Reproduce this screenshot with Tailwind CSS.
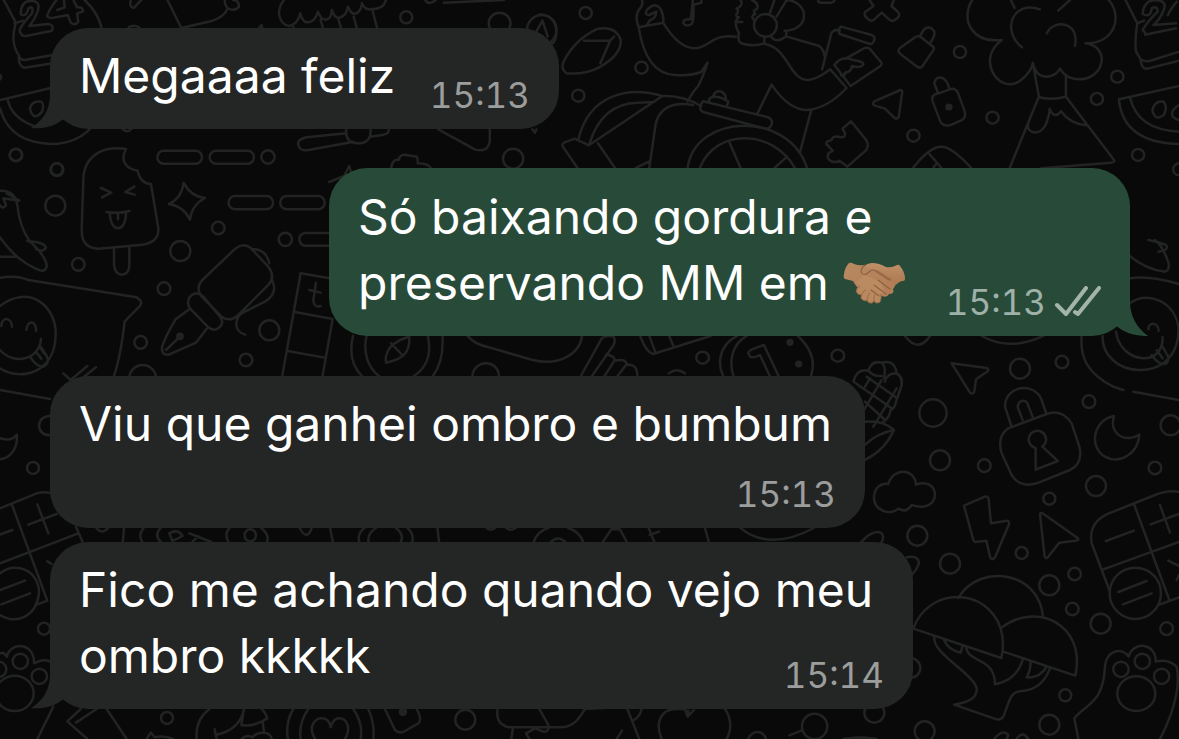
<!DOCTYPE html>
<html lang="pt-BR">
<head>
<meta charset="utf-8">
<meta name="viewport" content="width=device-width, initial-scale=1">
<title>Conversa</title>
<script src="https://cdn.jsdelivr.net/npm/@tailwindcss/browser@4"></script>
</head>
<body class="relative min-h-screen overflow-x-hidden bg-[#090909] font-[Inter,'Liberation_Sans',sans-serif] text-white">

<!-- Doodle wallpaper -->
<svg class="absolute inset-0 h-full w-full [&_*]:[vector-effect:non-scaling-stroke]" viewBox="0 0 1179 739" preserveAspectRatio="xMinYMin slice" fill="none" stroke="#222323" stroke-width="2.5" stroke-linecap="round" stroke-linejoin="round" aria-hidden="true">
  <!-- top left: calendar, cups, watermelon -->
  <g transform="scale(.3762 .3333)">
    <path d="M10 0L42 68Q32 110 38 135Q44 160 50 165Q48 200 65 203L140 190M50 165Q52 180 66 180L140 165M38 70L62 62M225 0Q262 40 270 84"/>
    <path d="M55 42Q55 5 80 2Q110 2 100 35Q92 60 78 78L128 72Q145 75 138 92L70 108Q55 110 52 90Q60 70 85 40Q90 15 76 25Q68 55 55 42ZM150 0Q130 30 125 48Q130 58 150 52L180 45L188 68Q200 78 208 65L205 40L220 35Q222 20 205 22L195 0M152 30L172 22L170 0"/>
    <path d="M348 0Q342 22 356 24Q366 10 376 0M445 0L482 84L560 64Q598 50 605 25Q625 35 635 20Q635 0 620 0M605 25Q595 10 598 0M342 82Q355 72 370 82M690 82L695 75L697 82"/>
    <path d="M755 0Q740 20 742 45Q748 76 770 78Q792 72 798 40Q806 72 822 66Q838 64 845 35Q855 64 870 58Q880 55 882 30Q892 62 908 50Q920 45 925 20Q935 50 950 38Q960 30 962 10Q970 30 985 28Q1020 28 1026 0M780 78V82M852 60L858 82M900 60L906 82M940 50L948 82M990 30L1002 82M1180 8L1340 0M1130 0Q1140 18 1158 0"/>
    <ellipse cx="1080" cy="52" rx="16" ry="18"/><ellipse cx="1328" cy="70" rx="29" ry="32"/><ellipse cx="1440" cy="90" rx="39" ry="45"/><path d="M1418 110L1442 62L1456 110"/>
    <path d="M0 300L135 264M0 325Q25 430 140 432Q200 430 238 388M20 298Q30 355 95 380M80 330Q80 302 110 305Q118 315 112 335Q90 365 80 330M325 386Q338 402 350 386"/>
    <ellipse cx="42" cy="465" rx="16" ry="18"/><ellipse cx="151" cy="508" rx="16" ry="18"/>
    <path d="M0 225Q6 230 0 238M920 400L815 412Q785 420 795 440Q800 454 820 450L940 425M920 388Q918 430 950 430Q988 430 985 388M985 410L1020 404Q1035 400 1033 388M1165 388L1262 448Q1295 460 1302 425V388M1415 388L1422 398L1426 388"/>
    <path d="M875 546L915 528L928 498L934 520M1040 506Q1042 476 1060 480Q1062 462 1080 465L1108 470Q1112 482 1110 490Q1140 490 1146 506"/>
    <ellipse cx="1364" cy="476" rx="27" ry="30"/>
  </g>
  <!-- top right: wheelchair rider, tree, locks -->
  <g transform="translate(540 0) scale(.4077 .3333)">
    <path d="M0 43Q42 48 40 100Q38 128 30 130M138 88Q185 75 198 120Q200 165 145 202Q110 225 65 220Q48 205 60 180Q85 120 138 88ZM108 122H172L148 190M172 122L182 110"/>
    <path d="M250 0Q255 15 242 30Q232 50 242 82L302 68Q305 50 295 25Q280 5 262 30Q255 45 268 45L285 35Q285 55 270 60L262 75M242 82Q260 220 330 225Q370 228 395 216L411 188Q400 230 388 258Q375 275 362 304M302 68Q340 145 380 145C415 145 420 100 480 110"/>
    <path d="M375 0L370 58Q350 55 352 70Q358 82 372 72Q378 65 376 14L396 8V0M492 0Q500 15 482 26Q490 32 482 42Q480 50 488 52Q478 62 482 66L496 66M480 66Q480 85 488 98Q482 130 500 132Q525 140 550 130V110M520 0Q538 10 532 28Q520 30 528 42Q515 48 525 60M575 0L562 45M605 0L580 50M605 0C660 5 665 90 600 92M604 92Q605 110 600 112Q580 132 565 108"/><ellipse cx="553" cy="76" rx="28" ry="34"/>
    <path d="M606 110L685 138Q697 150 698 168M552 132C610 145 610 240 658 240Q680 238 712 208M568 254Q610 330 655 330Q705 325 752 264M568 254L532 344M665 332L638 455M692 208L715 98Q725 85 735 92M738 80L814 105Q825 112 818 125Q815 135 805 130L735 102Q730 90 738 80M712 208L752 264M722 195L762 258L835 198Q842 190 832 180L808 145Q800 140 790 148L750 176M722 195Q740 165 768 180Q798 185 792 195Q785 205 765 198Q765 215 748 218Q748 230 738 226"/>
    <path d="M95 415C120 290 210 255 300 288L120 436Q150 310 240 308L280 306M300 288Q350 285 395 318M268 504L284 370Q300 300 375 315M92 504L56 440Q52 430 65 425L85 416L120 436M142 430L184 504M235 504L268 484M400 304L560 352Q572 360 568 374Q562 390 550 385L400 336Q385 325 400 304M415 305V296Q425 286 445 294L462 304L458 318M425 288Q430 270 445 275Q458 285 455 298"/>
    <path d="M362 504C380 340 610 330 655 504M392 504C430 385 570 385 625 504M465 428L492 504M606 470L575 504"/>
    <path d="M682 0Q682 8 690 8H715Q722 5 722 0M808 0L818 18L798 35Q793 45 802 54Q812 68 820 58L838 38L856 58Q865 68 875 56Q885 45 878 36L862 18L868 0M920 112L882 145Q876 155 884 162L925 200Q935 208 940 195L966 148Q968 140 958 135L935 112Q928 105 920 112M932 108L942 88Q955 75 966 92Q972 105 955 132M820 304L884 270Q890 270 888 280L880 350Q878 358 870 354L846 326L820 316Q814 312 820 304M978 280Q955 285 965 310L982 365Q990 380 1005 376L1032 362Q1045 355 1042 335L1025 278Q1018 262 1005 268ZM976 278L967 250Q970 230 985 233Q998 238 1005 268"/>
    <ellipse cx="1003" cy="321" rx="6" ry="7" fill="#222323"/>
    <path d="M763 364L800 420Q810 440 796 455L754 500L735 482Q720 492 708 478Q700 462 718 452L702 432Q700 425 715 420Q718 405 738 412Q750 412 748 400L742 386Z"/>
    <path d="M1060 0C1030 60 1060 130 1133 120C1065 180 1130 290 1180 240Q1205 215 1209 188Q1215 230 1245 230Q1268 225 1275 206Q1290 238 1325 238C1385 235 1400 140 1338 130C1410 130 1430 50 1395 0M1155 0L1164 24M1226 28C1160 0 1130 90 1182 142M1271 32L1300 0M1243 100C1260 55 1325 65 1312 138M1209 190L1224 292Q1255 302 1290 290V225M1222 295L1152 504M1290 290L1408 480Q1412 486 1400 488L1230 505M1198 370C1190 400 1225 410 1240 375Q1250 345 1250 326Q1262 360 1278 334Q1300 372 1340 376"/>
    <path d="M1436 0L1465 70Q1458 130 1462 155L1473 178Q1475 208 1490 206L1568 182M1473 178Q1480 185 1495 183L1568 155M1465 70L1482 62M1478 42Q1480 5 1505 0Q1540 0 1530 30Q1520 60 1505 75L1560 70M1484 98L1478 90Q1490 65 1515 35Q1515 15 1500 25Q1498 55 1478 42M1484 104L1560 85M1562 5Q1545 30 1540 45"/>
    <path d="M1568 258L1420 298Q1430 428 1568 432M1447 292Q1465 390 1568 395M1502 330Q1508 300 1530 305Q1540 325 1530 345Q1508 365 1502 330M1568 315Q1545 330 1552 350Q1560 360 1568 360"/>
    <path d="M915 504Q955 440 985 440Q1010 440 1058 504M955 462L985 504M965 502L972 492"/>
    <g><ellipse cx="112" cy="39" rx="15" ry="18"/><ellipse cx="249" cy="203" rx="15" ry="18"/><ellipse cx="94" cy="287" rx="15" ry="18"/><ellipse cx="1030" cy="156" rx="15" ry="18"/><ellipse cx="916" cy="407" rx="15" ry="18"/><ellipse cx="1110" cy="353" rx="15" ry="18"/><ellipse cx="1416" cy="230" rx="15" ry="18"/><ellipse cx="1366" cy="297" rx="15" ry="18"/><ellipse cx="1467" cy="465" rx="15" ry="18"/><ellipse cx="1568" cy="508" rx="15" ry="18"/></g>
  </g>
  <!-- left middle: ice lolly, sparkle, fountain pen, speech bubble -->
  <g transform="translate(0 130) scale(.3333)">
    <path d="M378 57Q330 50 295 68Q250 95 250 150L245 300Q245 355 295 356L420 345Q478 340 475 295L453 162Q420 160 413 122C375 115 360 90 378 57M342 354V405Q345 433 365 434Q388 432 388 405V350M303 174L334 188L306 202M403 170L376 186L404 194M320 246Q355 252 388 243M330 250C330 310 378 310 378 248M354 252V268"/>
    <rect x="472" y="62" width="134" height="39" rx="19"/><rect x="629" y="62" width="133" height="39" rx="19"/><circle cx="804" cy="81" r="20"/>
    <rect x="686" y="198" width="133" height="40" rx="19"/><rect x="841" y="198" width="133" height="40" rx="19"/><circle cx="856" cy="328" r="20"/><path d="M990 309H915Q898 312 898 328Q900 346 915 347H990"/>
    <path d="M551 158Q572 200 615 204Q575 225 570 269Q550 228 507 222Q545 205 551 158Z"/>
    <path d="M607 450L706 356Q728 338 750 352L805 410Q828 440 805 465L715 555Q690 578 665 560L605 500Q585 475 607 450M570 500Q590 480 610 500L660 560Q675 580 655 595Q640 605 625 592L570 535Q558 518 570 500M570 536L527 568Q495 620 486 652Q485 680 512 672L588 638L620 596M498 660L540 620M760 357Q800 360 808 400M817 452Q835 490 795 515L735 545C700 560 700 605 736 614"/><circle cx="540" cy="619" r="8" fill="#222323"/>
    <path d="M0 182Q45 180 52 225Q58 290 90 335Q140 380 140 410Q135 425 122 422Q50 395 0 322M0 380H48M0 225Q8 240 18 225L10 205L58 212L20 190M82 333Q140 338 137 355Q128 368 108 357"/>
    <path d="M0 443Q50 435 85 450L410 502Q432 515 418 530L374 574Q362 680 342 737M190 730L212 750M262 708L212 750M288 712L240 750M0 528C90 460 170 530 167 615C165 730 60 755 0 715M0 660C45 710 120 685 123 627M4 588C5 560 34 560 36 590M79 600C82 570 110 570 108 603M90 680Q110 712 130 710Q150 700 140 678L124 652M108 666L124 686M122 655L132 670"/>
    <path d="M990 445L902 430L847 737M885 546L998 567L968 737M863 663L974 683M948 458L940 510Q942 535 962 528M928 480L962 488"/>
    <g><circle cx="48" cy="75" r="19"/><circle cx="171" cy="119" r="19"/><circle cx="166" cy="227" r="30"/><circle cx="235" cy="403" r="19"/><circle cx="655" cy="294" r="19"/><circle cx="541" cy="363" r="30"/><circle cx="492" cy="476" r="19"/><circle cx="422" cy="637" r="19"/><circle cx="738" cy="690" r="19"/><circle cx="808" cy="601" r="30"/><circle cx="428" cy="745" r="40"/></g>
  </g>
  <!-- right edge of the outgoing bubble -->
  <g transform="translate(830 240) scale(.3333)">
    <path d="M895 45Q950 90 1005 95Q1020 90 1016 70Q1000 20 975 0M955 0Q985 5 1008 15Q1020 30 985 35M900 115Q960 105 1047 132M898 190C960 150 1035 190 1045 260C1050 330 1010 390 930 390C860 390 815 340 818 288M858 275C870 370 1000 385 998 292M955 268C955 245 985 245 986 272M965 345Q990 380 1010 370Q1020 355 1012 345L998 320M980 330L998 355M755 288C750 350 770 400 850 440L880 450M225 288Q265 340 300 288M455 288Q540 335 640 288"/>
  </g>
  <!-- right: berry, cursor, padlock, moon, cloud, bolt, pill -->
  <g transform="translate(840 330) scale(.3333)">
    <path d="M40 155Q50 115 85 122Q95 90 125 98Q165 88 170 130Q195 145 180 180Q175 195 168 215Q165 235 152 240Q148 265 130 275M85 122Q100 140 125 138M125 98Q140 110 132 145M170 130Q140 130 135 155M45 158L155 235M80 140L172 205M100 290L170 175M72 240L125 150M75 170L90 145M75 215L135 270M75 275Q130 270 162 300Q135 360 75 390M75 345Q110 310 162 300"/>
    <path d="M335 100L440 114Q450 118 440 126L408 148L403 185Q398 195 390 188Z"/>
    <path d="M505 295L620 252Q665 235 695 280L718 350Q730 400 690 420L590 460Q540 475 515 435L485 370Q470 320 505 295M514 288L495 230C495 165 585 155 605 210L618 248M548 270L533 232C535 208 560 205 565 228L578 260M587 354A26 26 0 1 1 607 350L654 393L587 419Z"/>
    <path d="M822 258C760 270 745 350 795 380C840 405 895 370 898 314C860 340 805 315 822 258Z"/>
    <path d="M145 462C160 410 225 415 228 464C295 440 305 530 245 530Q225 530 215 525Q200 550 175 536C150 560 100 540 102 500C104 475 120 458 145 462Z"/>
    <path d="M372 527L435 500Q445 498 446 508L453 580L502 572Q510 574 506 585L466 680Q455 695 450 680L439 632L405 636Q402 636 400 630ZM600 552Q602 545 612 553L714 625Q718 632 705 632L658 638L625 680Q618 690 614 680ZM372 527L400 630"/>
    <path d="M1017 485Q980 480 945 495L800 553Q745 580 755 640L808 780M798 633L882 602M882 522L988 810M790 718L1017 636M932 583L1017 552M960 525L990 608M985 692L1017 708M1017 735L1010 750M955 825L1017 802"/>
    <circle cx="886" cy="790" r="77"/><path d="M835 786L920 753M849 823L935 790"/>
    <path d="M60 640Q100 595 125 610Q135 625 122 640M880 185L1017 210"/>
    <g><circle cx="279" cy="249" r="41"/><circle cx="540" cy="116" r="30"/><circle cx="666" cy="96" r="19"/><circle cx="747" cy="215" r="19"/><circle cx="992" cy="286" r="30"/><circle cx="300" cy="391" r="30"/><circle cx="433" cy="407" r="19"/><circle cx="945" cy="414" r="19"/><circle cx="768" cy="468" r="30"/><circle cx="628" cy="506" r="18"/><circle cx="232" cy="617" r="30"/></g>
  </g>
  <!-- bottom right: mushrooms and paw -->
  <g transform="translate(840 530) scale(.3333)">
    <path d="M220 296C265 170 440 170 482 295Q495 340 484 384ZM355 204C420 95 600 125 609 262M482 295C590 210 740 285 706 437L490 365M283 320C275 370 400 430 410 475C412 500 395 515 342 524L470 568Q485 572 492 555C510 510 510 485 545 483C590 480 615 455 630 415M378 352C385 400 465 380 465 463Q530 450 548 390M312 330Q325 360 362 368L368 348M572 395Q572 420 560 442Q600 445 620 410"/>
    <path d="M715 627L703 565C740 520 790 520 795 410C800 360 845 350 866 380C880 330 950 340 947 395Q985 385 1010 410C1025 480 990 570 960 627"/>
    <ellipse cx="889" cy="491" rx="57" ry="52"/><circle cx="843" cy="418" r="23"/><circle cx="907" cy="394" r="23"/><circle cx="965" cy="439" r="23"/>
    <g><circle cx="545" cy="69" r="18"/><circle cx="330" cy="101" r="30"/><circle cx="628" cy="166" r="30"/><circle cx="704" cy="132" r="19"/><circle cx="697" cy="237" r="19"/><circle cx="782" cy="281" r="30"/><circle cx="980" cy="296" r="19"/><circle cx="676" cy="496" r="18"/><circle cx="628" cy="584" r="30"/><circle cx="103" cy="548" r="30"/><circle cx="254" cy="604" r="30"/><circle cx="212" cy="414" r="29"/></g>
    <path d="M200 82Q235 75 237 100Q230 120 215 135M462 627Q490 595 505 615L500 627M530 627Q548 600 565 627M20 627Q60 620 110 627"/>
  </g>
  <!-- left edge: moon, pill, paw -->
  <g transform="translate(0 370) scale(.3333)">
    <path d="M0 60L150 87M0 205Q35 215 50 194C55 235 30 265 0 268M150 137Q118 140 117 168Q120 195 150 196M0 415L110 370Q140 362 160 372M35 402L142 692M0 494L37 480M0 580L235 490M85 464L170 432M112 403L145 490M228 470L248 516M142 574L155 582M142 692L112 703M0 610C50 570 118 605 117 668C110 740 50 765 0 735M0 660L75 632M4 703L90 670"/>
    <circle cx="99" cy="294" r="18"/><circle cx="132" cy="776" r="18"/><ellipse cx="44" cy="970" rx="57" ry="53"/><circle cx="-4" cy="898" r="23"/><circle cx="61" cy="874" r="23"/><circle cx="118" cy="919" r="23"/>
    <path d="M0 850Q12 845 20 860C35 810 105 820 102 880Q130 865 150 875M112 1107L160 1010"/>
  </g>
  <!-- strip between outgoing bubble and the third bubble -->
  <g transform="translate(240 310) scale(.3954 .3333)">
    <path d="M286 77C275 130 285 170 308 198M512 77C515 130 505 170 488 198M320 77C310 130 325 175 352 198M475 77C485 130 475 170 440 198M428 80Q395 90 378 115Q365 140 370 158Q405 150 418 130Q430 110 428 80M382 100L408 132M575 77Q595 105 630 112L740 150C810 170 860 130 865 77M588 198C590 150 652 145 655 198M862 198L915 85Q925 75 945 80Q950 90 945 105L890 198M925 135Q945 135 948 150L922 198M948 152Q975 145 978 162L955 198M978 165Q1005 160 1005 198M1012 77Q1025 125 1045 132L1190 78M1035 77L1050 125M1085 77L1096 108M1258 77C1205 110 1210 170 1222 198M1410 77C1450 120 1455 160 1444 198M1282 77C1235 110 1240 170 1248 198M1290 140Q1280 125 1295 118L1325 105L1362 198M1290 140Q1300 145 1315 135L1340 198M1085 190Q1105 172 1125 190"/>
    <ellipse cx="1170" cy="143" rx="16" ry="18"/><ellipse cx="1512" cy="137" rx="16" ry="18"/><ellipse cx="1391" cy="97" rx="6" ry="7" fill="#222323"/><ellipse cx="1413" cy="162" rx="6" ry="7" fill="#222323"/>
  </g>
  <!-- strip between third and fourth bubbles -->
  <g transform="translate(0 500) scale(.574 .3333)">
    <path d="M168 84Q178 105 188 84M216 84L214 126M250 84Q240 105 248 126M280 84Q268 105 280 126M295 100Q310 85 318 108Q305 120 300 122ZM330 100L368 126M335 126L345 108M400 84Q390 100 398 126M455 84Q470 105 465 126M522 84Q535 125 543 84M575 84L580 126M626 126Q622 100 635 84M718 126Q722 105 710 84M642 126Q640 100 655 84M698 126Q705 105 690 84M762 84L765 126M930 126Q935 95 955 84M1016 126Q1010 95 990 84M960 126Q972 105 985 126M1050 126L1065 88H1080L1092 126M1130 84L1140 126M1132 105L1148 95M1228 84L1235 126M1290 84Q1340 155 1418 84M848 84Q855 94 862 84M882 84Q890 94 898 84"/>
    <ellipse cx="436" cy="106" rx="10" ry="18"/>
  </g>
  <!-- bottom strip -->
  <g transform="translate(50 700) scale(.3333)">
    <path d="M92 27L52 64L112 117M140 27L78 68M170 27L230 117M290 117L302 98L315 112Q340 105 370 117M478 27Q435 60 440 117M582 27Q570 90 497 105L494 88L500 117M582 27L574 75Q610 82 652 55Q645 35 635 27M638 65L642 95M575 117Q590 102 608 112C620 95 660 90 665 117M730 27Q705 70 714 117M955 27Q975 70 970 117M775 27Q745 70 752 117M910 27Q940 70 932 117M795 117C770 75 800 55 815 55Q838 55 842 82Q850 55 868 55C890 55 905 85 885 117M1005 27L1035 90Q1045 100 1060 96L1105 70Q1118 60 1100 27"/>
    <circle cx="351" cy="54" r="18"/><circle cx="1059" cy="36" r="9" fill="#222323"/><circle cx="1246" cy="59" r="30"/>
  </g>
  <g transform="translate(480 700) scale(.3333)">
    <path d="M53 27Q45 70 85 82H240C285 82 300 50 315 27L370 24M178 27L205 75Q208 98 190 95L165 85L138 100L148 117M98 88L94 117M410 117L426 92M442 27L478 117M485 27Q480 50 462 60M545 117C525 70 540 27 590 27H615L623 50L642 30M623 50L625 32M735 27C755 55 755 90 740 117M804 117Q815 95 835 96Q852 98 858 117M928 106L964 92M1090 117Q1140 108 1185 117"/>
    <circle cx="1004" cy="79" r="38"/>
  </g>
</svg>

<main class="relative flex flex-col items-start pt-7 pr-[49px] pb-[30px] pl-[50px] text-[48px] leading-[66px]">

  <article class="relative flex w-[509px] max-w-full items-end justify-between rounded-[38px] bg-[#242625] px-[29px] pt-[15px] pb-3">
    <svg class="absolute bottom-0 -left-5 h-[50px] w-10" viewBox="0 0 40 50" fill="#242625" aria-hidden="true"><path d="M20 0V16C20 30 13 42 1 49C12 50 24 48 32 41L40 38V0Z"/></svg>
    <p class="relative pb-2">Megaaaa feliz</p>
    <time class="relative text-[35px] leading-[44px] text-[#9c9d9d] tabular-nums">15:13</time>
  </article>

  <article class="relative mt-[39px] flex w-[801px] max-w-full items-end justify-between self-end rounded-[38px] bg-[#284b39] px-[29px] pt-4 pb-3">
    <svg class="absolute -right-[18px] bottom-0 h-[50px] w-10" viewBox="0 0 40 50" fill="#284b39" aria-hidden="true"><path d="M22 0V16C22 30 29 42 40 50C30 50 18 48 10 41L0 38V0Z"/></svg>
    <p class="relative pb-2">Só baixando gordura e<br>preservando MM em
      <svg class="-mt-2 inline-block h-[44px] w-[64px] align-middle" viewBox="0 0 64 44" role="img" aria-label="aperto de mãos">
        <defs>
          <linearGradient id="skinA" x1="0" y1="0" x2="0" y2="1"><stop offset="0" stop-color="#bf9068"/><stop offset="1" stop-color="#a87349"/></linearGradient>
          <linearGradient id="skinB" x1="0" y1="0" x2="1" y2="1"><stop offset="0" stop-color="#b98a62"/><stop offset="1" stop-color="#b07c55"/></linearGradient>
        </defs>
        <path d="M20 8Q24 2 30 2Q37 2 44 6Q50 7 55 4Q57 3 58 5Q63 11 63 18Q63 20 60 20Q56 21 52 26L36 28L18 16Z" fill="url(#skinA)"/>
        <path d="M7 2Q9 1 12 3Q17 5 22 4L26 8Q34 7 39 12L50 20Q55 24 51 28Q53 33 47 33Q45 37 40 35L22 33Q14 26 11 20L3 18Q1 17 2 13Q3 6 7 2Z" fill="url(#skinB)"/>
        <g fill="#b98960" stroke="#996542" stroke-width=".8"><rect x="15" y="25" width="8" height="9" rx="4" transform="rotate(35 19 29)"/><rect x="20" y="29" width="8" height="11" rx="4" transform="rotate(28 24 34)"/><rect x="26" y="31" width="7" height="11" rx="3.5" transform="rotate(18 29 36)"/><rect x="32" y="32" width="7" height="10" rx="3.5" transform="rotate(8 35 37)"/></g>
        <path d="M14 21Q22 30 34 34L43 32L38 20L22 14Z" fill="#ba8a61"/>
        <path d="M23 4Q19 7 19 11Q22 16 27 11Q31 7 35 11L47 19M36 19L48 28M32 24L44 33M29 29L37 35" fill="none" stroke="#8f5f3e" stroke-width="1.1" stroke-linecap="round"/>
        <path d="M35 10L49 19" stroke="#9c6c48" stroke-width="1.5" stroke-linecap="round"/>
      </svg></p>
    <div class="relative flex items-center gap-2 text-[35px] leading-[44px] text-[#9fb1a8] tabular-nums">
      <time>15:13</time>
      <svg class="h-8 w-[47px]" viewBox="0 0 47 32" fill="none" stroke="#a3b4ab" stroke-width="4" stroke-linecap="round" stroke-linejoin="round" role="img" aria-label="Entregue"><path d="M3 19L12 28L32 2M21 26L24 28L45 2"/></svg>
    </div>
  </article>

  <article class="relative mt-10 flex w-[815px] max-w-full flex-col rounded-[38px] bg-[#242625] px-[29px] pt-[15px] pb-3">
    <p class="-mr-4">Viu que ganhei ombro e bumbum</p>
    <time class="mt-[15px] self-end text-[35px] leading-[44px] text-[#9c9d9d] tabular-nums">15:13</time>
  </article>

  <article class="relative mt-[14px] flex w-[863px] max-w-full flex-col rounded-[38px] bg-[#242625] px-[29px] pt-[15px] pb-3">
    <svg class="absolute bottom-0 -left-5 h-[50px] w-10" viewBox="0 0 40 50" fill="#242625" aria-hidden="true"><path d="M20 0V16C20 30 13 42 1 49C12 50 24 48 32 41L40 38V0Z"/></svg>
    <p class="relative -mr-4">Fico me achando quando vejo meu<br>ombro kkkkk</p>
    <time class="relative -mt-9 self-end text-[35px] leading-[44px] text-[#9c9d9d] tabular-nums">15:14</time>
  </article>

</main>
</body>
</html>
